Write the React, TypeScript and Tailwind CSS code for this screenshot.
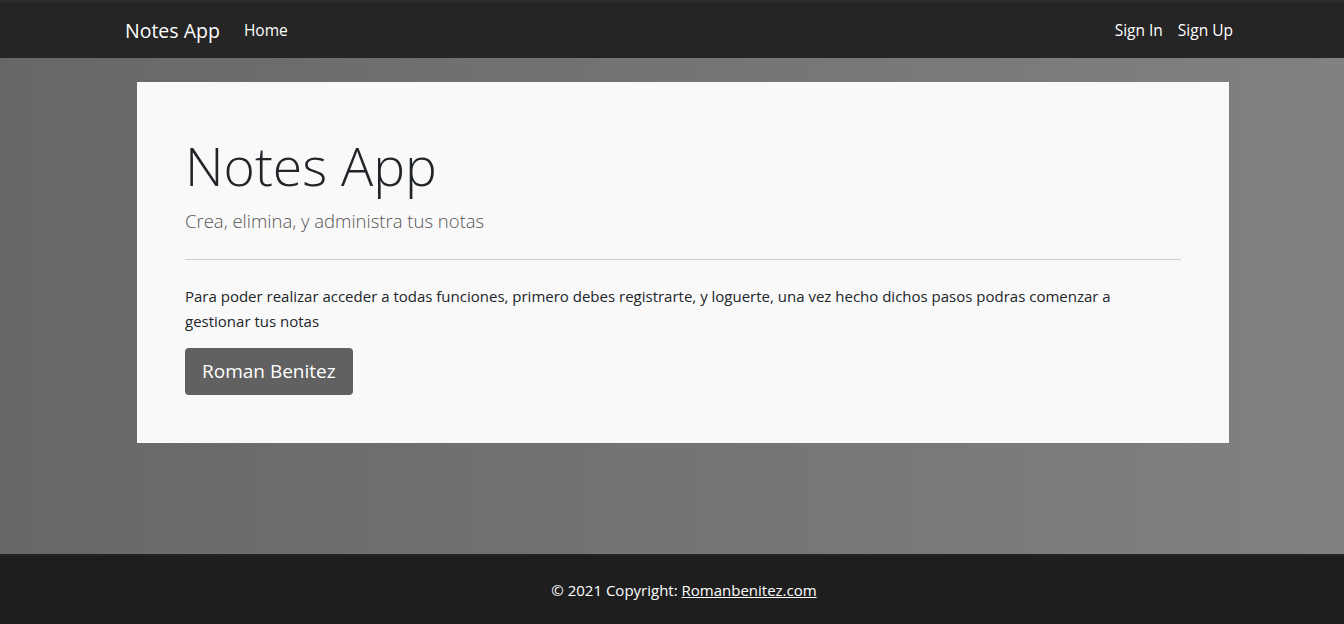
export default function App() {
  return (
    <div className="flex h-[624px] flex-col font-['Open_Sans',sans-serif] text-[#212529]">
      {/* NAVBAR */}
      <nav className="h-[58px] shrink-0 border-t-2 border-[#2c2c2c] bg-[#252525]">
        <div className="mx-auto flex h-full w-[1140px] items-center pl-[23px] pr-[9px] pt-[2px]">
          <a className="mr-6 text-[19.5px] leading-none text-white">Notes App</a>
          <a className="text-[15.5px] leading-none text-white">Home</a>
          <div className="ml-auto flex items-center gap-[15px] text-[15.5px] leading-none text-white">
            <a>Sign In</a>
            <a>Sign Up</a>
          </div>
        </div>
      </nav>

      {/* CONTENIDO */}
      <main className="flex-1 bg-gradient-to-r from-[#676767] to-[#818181] pt-6">
        <div className="ml-[137px] w-[1092px] bg-[#f9f9f9] px-12 pb-12 pt-[52px]">
          <h1 className="text-[53.5px] font-light leading-[1.2] text-[#212529]">Notes App</h1>
          <p className="mt-[9px] text-[18.5px] font-light text-[#555]">
            Crea, elimina, y administra tus notas
          </p>
          <hr className="mb-[24px] mt-[24px] border-t border-[#cfcfcf]" />
          <p className="pr-[16px] text-[15px] leading-[25px] text-[#212529]">
            Para poder realizar acceder a todas funciones, primero debes registrarte, y loguerte, una vez hecho
            dichos pasos podras comenzar a gestionar tus notas
          </p>
          <button className="mt-[14px] h-[47px] rounded-[4px] bg-[#616161] px-[17px] text-[19px] text-white">
            Roman Benitez
          </button>
        </div>
      </main>

      {/* FOOTER */}
      <footer className="flex h-[70px] shrink-0 items-center justify-center border-t-2 border-[#242424] bg-[#1e1e1e] pl-[24px] text-[15px] text-white">
        <span>
          © 2021 Copyright: <a className="underline">Romanbenitez.com</a>
        </span>
      </footer>
    </div>
  );
}
